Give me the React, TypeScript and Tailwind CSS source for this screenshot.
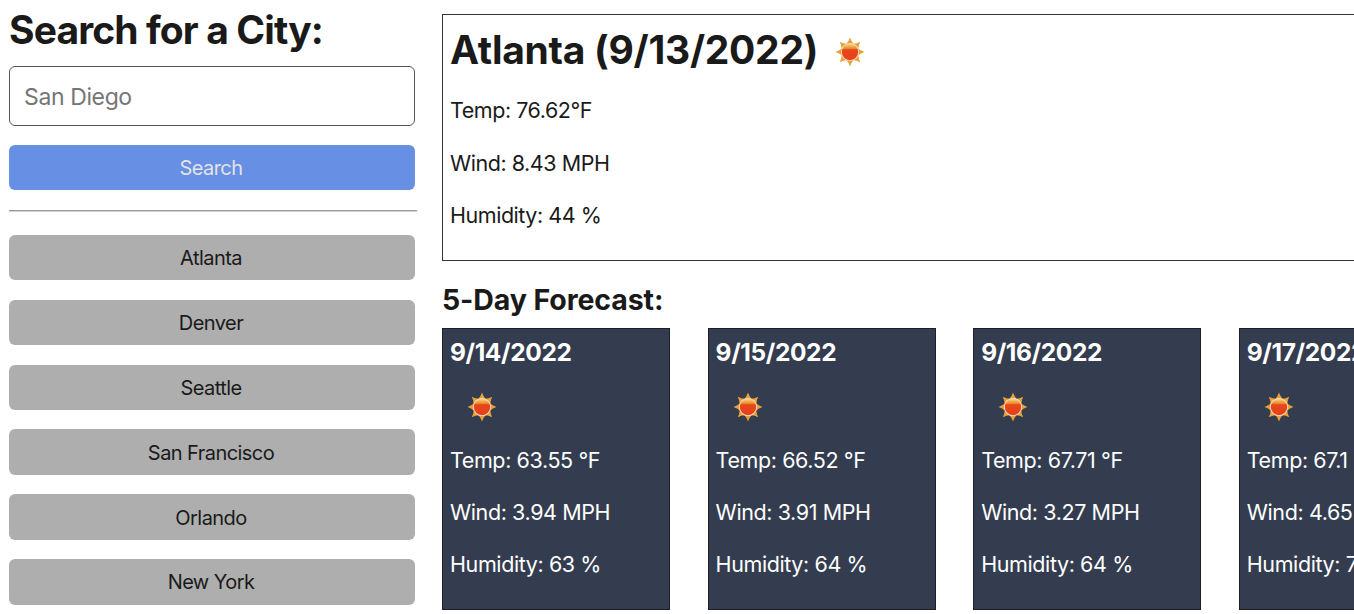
const cities = ["Atlanta", "Denver", "Seattle", "San Francisco", "Orlando", "New York"];

const days = [
  { date: "9/14/2022", temp: "63.55 °F", wind: "3.94 MPH", humidity: "63 %" },
  { date: "9/15/2022", temp: "66.52 °F", wind: "3.91 MPH", humidity: "64 %" },
  { date: "9/16/2022", temp: "67.71 °F", wind: "3.27 MPH", humidity: "64 %" },
  { date: "9/17/2022", temp: "67.1 °F", wind: "4.65 MPH", humidity: "70 %" },
];

const rays = [0, 45, 90, 135, 180, 225, 270, 315];

function Sun({ className = "" }: { className?: string }) {
  return (
    <svg viewBox="-15 -15 30 30" className={`h-[30px] w-[30px] shrink-0 ${className}`}>
      <defs>
        <linearGradient id="sun-disc" x1="0" y1="0" x2="0" y2="1">
          <stop offset="0" stopColor="#f9d79a" />
          <stop offset="0.16" stopColor="#efad48" />
          <stop offset="0.28" stopColor="#eb8c36" />
          <stop offset="0.36" stopColor="#e8461d" />
          <stop offset="1" stopColor="#e6401a" />
        </linearGradient>
      </defs>
      {rays.map((a) => (
        <path key={a} d="M-3.7 -8 Q-1.3 -10.6 0 -14.5 Q1.3 -10.6 3.7 -8 Z" fill="#e8a038" transform={`rotate(${a})`} />
      ))}
      <circle r="9.1" fill="#f8dfc6" />
      <circle r="8.2" fill="url(#sun-disc)" />
    </svg>
  );
}

export default function App() {
  return (
    <div className="flex h-[614px] w-full overflow-hidden bg-white font-['Inter',sans-serif] text-[#1a1a1a]">
      <aside className="ml-[9px] w-[408px] shrink-0">
        <h1 className="mt-[6px] h-[48px] whitespace-nowrap text-[39px] font-bold leading-[48px] tracking-[-0.88px]">
          Search for a City:
        </h1>
        <input
          placeholder="San Diego"
          className="mt-[12px] block h-[60px] w-[406px] rounded-[6px] border border-[#555] px-[14px] pt-[1px] text-[23px] tracking-[-0.38px] placeholder:text-[#757575]"
        />
        <button className="mt-[19px] block h-[45px] w-[406px] rounded-[6px] bg-[#678fe3] pr-[2px] text-[20px] tracking-[-0.6px] text-[#e3e3e8]">
          Search
        </button>
        <hr className="mt-[20px] h-[2px] border-t border-b border-t-[#999] border-b-[#d4d4d4]" />
        <div className="mt-[22.8px] flex w-[406px] flex-col gap-[19.6px]">
          {cities.map((c) => (
            <button key={c} className="h-[45.3px] rounded-[6px] bg-[#aeaeae] pr-[2px] pt-px text-[20px] tracking-[-0.56px]">
              {c}
            </button>
          ))}
        </div>
      </aside>
      <main className="ml-[25px] w-[1400px] shrink-0">
        <section className="mt-[14px] h-[247px] border border-[#333] pl-[7px] pt-[11px]">
          <div className="flex items-center gap-[17px]">
            <h2 className="h-[48px] text-[39px] font-bold leading-[48px] tracking-[-0.27px]">Atlanta (9/13/2022)</h2>
            <Sun className="mt-[4px]" />
          </div>
          <div className="mt-[10px] text-[21.5px] leading-[52.5px] tracking-[-0.46px]">
            <p>Temp: 76.62°F</p>
            <p>Wind: 8.43 MPH</p>
            <p>Humidity: 44 %</p>
          </div>
        </section>
        <h3 className="mt-[21px] h-[36px] text-[28.5px] font-bold leading-[36px] tracking-[-0.1px]">5-Day Forecast:</h3>
        <div className="mt-[10px] flex gap-[37.6px]">
          {days.map((d) => (
            <article
              key={d.date}
              className="h-[282px] w-[228px] border border-[#1c1f24] bg-[#333d4f] pl-[7px] pt-[8px] text-white"
            >
              <h4 className="h-[31px] text-[24.5px] font-bold leading-[30px] tracking-[-0.37px]">{d.date}</h4>
              <div className="ml-[17px] mt-[24px]">
                <Sun />
              </div>
              <div className="mt-[12px] text-[21.5px] leading-[52px] tracking-[-0.4px]">
                <p>Temp: {d.temp}</p>
                <p>Wind: {d.wind}</p>
                <p>Humidity: {d.humidity}</p>
              </div>
            </article>
          ))}
        </div>
      </main>
    </div>
  );
}
